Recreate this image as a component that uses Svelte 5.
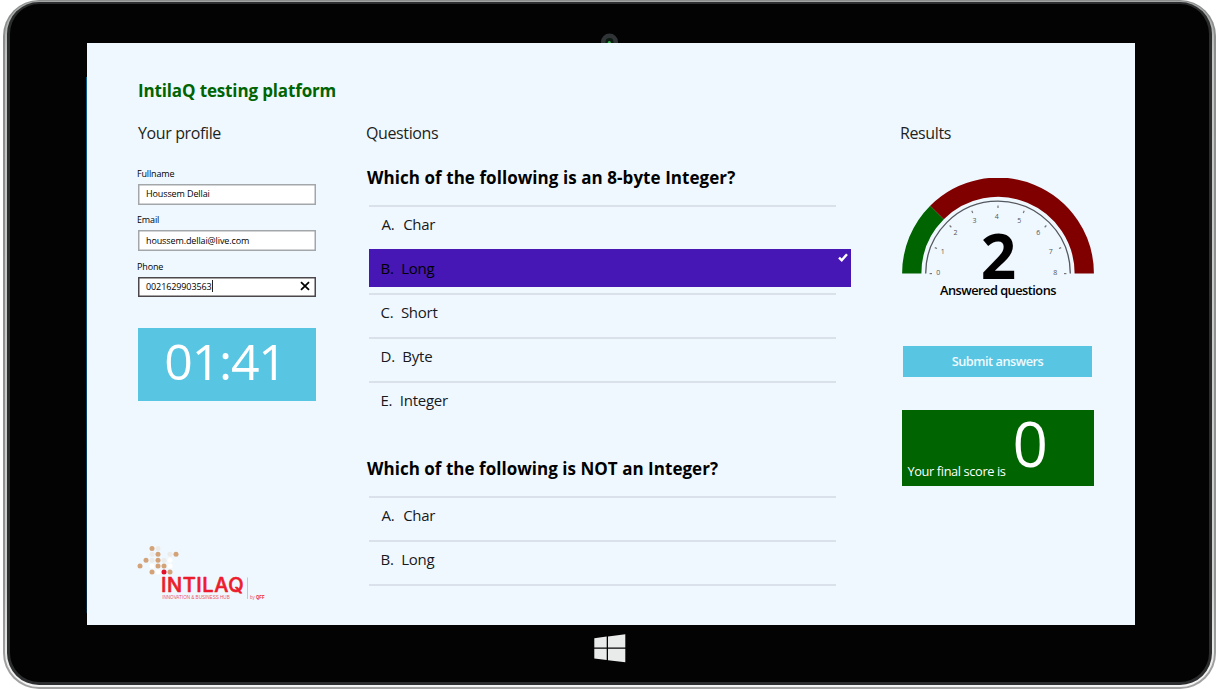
<script>
  const questions = [
    {
      title: 'Which of the following is an 8-byte Integer?',
      spacing: '0.06px',
      selected: 1,
      options: ['Char', 'Long', 'Short', 'Byte', 'Integer']
    },
    {
      title: 'Which of the following is NOT an Integer?',
      spacing: '0.03px',
      selected: -1,
      options: ['Char', 'Long']
    }
  ];
  const letters = ['A.', 'B.', 'C.', 'D.', 'E.'];

  const gauge = [0, 1, 2, 3, 4, 5, 6, 7, 8].map((n) => {
    const a = Math.PI * (1 - n / 8);
    return {
      n,
      x1: 96 + 66 * Math.cos(a),
      y1: 95.6 - 65.5 * Math.sin(a),
      x2: 96 + 68.4 * Math.cos(a),
      y2: 95.6 - 68 * Math.sin(a),
      tx: 94.8 + 58.5 * Math.cos(a),
      ty: 97 - 56 * Math.sin(a)
    };
  });

  const tan = '#d3a377';
  const pale = '#ebebea';
  const dots = [
    [27, 13.5, tan], [33, 13.5, pale],
    [27, 19.3, pale], [33, 19.3, tan], [45, 19.3, pale], [51, 19.3, tan],
    [21, 25.2, tan], [27, 25.2, pale], [33, 25.2, tan], [39, 25.2, pale], [45, 25.2, '#fff'],
    [15, 31, tan], [27, 31, '#fff'], [33, 31, tan], [39, 31, tan], [45, 31, '#fff'],
    [27, 37, tan], [33, 37, '#fff'], [39, 37, '#e4102a'], [45, 37, tan]
  ];
</script>

<div class="tablet">
  <div class="rim">
    <div class="bezel">
      <svg class="camera" width="20" height="10" viewBox="0 0 20 10">
        <circle cx="9.5" cy="9" r="8.5" fill="#303436" />
        <circle cx="9.5" cy="9" r="4" fill="#0b1a10" />
        <circle cx="9.3" cy="9.5" r="1.6" fill="#2fae4d" />
      </svg>

      <main class="screen">
        <h1>IntilaQ testing platform</h1>
        <div class="columns">
          <section class="profile">
            <h2>Your profile</h2>
            <div class="fields">
              <label>
                <span class="lab">Fullname</span>
                <span class="box">Houssem Dellai</span>
              </label>
              <label>
                <span class="lab">Email</span>
                <span class="box">houssem.dellai@live.com</span>
              </label>
              <label>
                <span class="lab">Phone</span>
                <span class="box active">
                  <span class="num">0021629903563</span><i class="caret"></i>
                  <svg width="10" height="10" viewBox="0 0 10 10">
                    <path d="M1 1.2 L9 8.8 M9 1.2 L1 8.8" stroke="#000" stroke-width="1.8" />
                  </svg>
                </span>
              </label>
            </div>
            <div class="timer">01:41</div>
            <svg class="logo" width="150" height="70" viewBox="0 0 150 70">
              {#each dots as [x, y, c]}
                <circle cx={x} cy={y} r="2.5" fill={c} />
              {/each}
              <text x="36" y="57" class="brand" textLength="82.5">INTILAQ</text>
              <text x="37.2" y="64.4" class="tag" textLength="67.5" lengthAdjust="spacingAndGlyphs">INNOVATION &amp; BUSINESS HUB</text>
              <path d="M122.5 42.5V64" stroke="#f3a3a8" stroke-width="0.8" />
              <text x="125" y="64.2" class="by">by</text>
              <text x="131" y="64.2" class="qff" textLength="8.5" lengthAdjust="spacingAndGlyphs">QFF</text>
            </svg>
          </section>

          <section class="questions">
            <h2>Questions</h2>
            {#each questions as q}
              <h3 style="letter-spacing:{q.spacing}">{q.title}</h3>
              <ul>
                {#each q.options as o, i}
                  <li class:selected={i === q.selected}>
                    <span class="opt o{i}"><span>{letters[i]}</span><span>{o}</span></span>
                    {#if i === q.selected}
                      <svg width="10" height="9" viewBox="0 0 10 9">
                        <path d="M1 4.6 L3.7 7.2 L9 1.2" fill="none" stroke="#fff" stroke-width="2.4" />
                      </svg>
                    {/if}
                  </li>
                {/each}
              </ul>
            {/each}
          </section>

          <section class="results">
            <h2>Results</h2>
            <svg class="gauge" width="194" height="122" viewBox="0 0 194 122">
              <path d="M9.75 95.5 A86.25 86.25 0 0 1 35.01 34.51" fill="none" stroke="#006400" stroke-width="19.3" />
              <path d="M35.01 34.51 A86.25 86.25 0 0 1 182.25 95.5" fill="none" stroke="#800000" stroke-width="19.3" />
              <path d="M23.7 95.5 A72.3 72.3 0 0 1 168.3 95.5" fill="none" stroke="#55585e" stroke-width="1.3" />
              {#each gauge as g}
                <line x1={g.x1} y1={g.y1} x2={g.x2} y2={g.y2} stroke="#777" stroke-width="1.2" />
                <text x={g.tx} y={g.ty} class="tick">{g.n}</text>
              {/each}
              <text x="96.5" y="101.4" class="count">2</text>
              <text x="38" y="116.8" class="caption" textLength="116.5">Answered questions</text>
            </svg>
            <div class="submit">Submit answers</div>
            <div class="score">
              <span class="text">Your final score is</span>
              <span class="value">0</span>
            </div>
          </section>
        </div>
      </main>

      <svg class="win" width="32" height="29" viewBox="0 0 32 29">
        <path d="M0.3 4.3 L12.7 2.6 V13.4 H0.3Z M14 2.4 L31.3 0.2 V13.4 H14Z M0.3 14.7 H12.7 V26 L0.3 24.4Z M14 14.7 H31.3 V28.2 L14 26.2Z" fill="#e9ebea" />
      </svg>
    </div>
  </div>
</div>

<style>
  :global(body) {
    background: #fff;
    overflow: hidden;
  }
  .tablet {
    box-sizing: border-box;
    width: 1213px;
    height: 689px;
    margin-left: 3px;
    padding: 1px 2px 2px;
    border-radius: 36px;
    background: linear-gradient(to bottom, #8c8e8e, #929494 85%, #a2a2a2);
    font-family: 'Open Sans', 'Noto Sans', sans-serif;
    color: #000;
  }
  .rim {
    box-sizing: border-box;
    height: 686px;
    padding: 1px 2px 2px;
    border-radius: 34px;
    background: linear-gradient(to bottom, #a4a6a6, #c4c4c4 8%, #d0d0d0 85%, #f4f4f4);
  }
  .bezel {
    box-sizing: border-box;
    height: 683px;
    border: solid #2c2d2e;
    border-width: 2px 3px 3px;
    border-radius: 32px;
    background: #030303;
    display: flex;
    flex-direction: column;
    align-items: center;
  }
  .camera {
    margin: 29px 0 0 0;
    flex: none;
  }
  .screen {
    box-sizing: border-box;
    width: 1048px;
    height: 582px;
    flex: none;
    margin-left: 3px;
    padding: 36px 0 0 51px;
    background: #f0f8ff;
    position: relative;
  }
  .screen::before {
    content: '';
    position: absolute;
    left: -1px;
    top: 34px;
    width: 1px;
    height: 536px;
    background: linear-gradient(to bottom, #0a5b90, #064a78 50%, #04233c);
  }
  .win {
    flex: none;
    margin: 9px 0 0 0;
  }
  h1, h2, h3 {
    margin: 0;
    white-space: nowrap;
  }
  h1 {
    font-size: 17px;
    line-height: 24px;
    font-weight: 700;
    letter-spacing: -0.14px;
    color: #006400;
  }
  .columns {
    display: grid;
    grid-template-columns: 229px 533px 194px;
    margin-top: 17px;
  }
  h2 {
    font-size: 16px;
    line-height: 26px;
    font-weight: 370;
    letter-spacing: -0.38px;
    color: #1c1f22;
  }
  .profile {
    width: 178px;
  }
  .questions h2 {
    margin-left: -1px;
  }
  .fields {
    display: flex;
    flex-direction: column;
    gap: 5px;
    margin: 21px 0 27px;
  }
  .fields label {
    display: block;
    height: 41.3px;
  }
  .lab {
    display: block;
    margin-left: -1px;
    font-size: 9px;
    line-height: 14px;
    height: 17px;
    letter-spacing: -0.15px;
  }
  .box {
    box-sizing: border-box;
    display: flex;
    align-items: center;
    height: 20.67px;
    padding: 0 6px 1px 8px;
    box-shadow: inset 0 0 0 1.5px #a3a7aa;
    background: #fff;
    font-size: 9px;
    letter-spacing: -0.11px;
  }
  .box.active {
    box-shadow: inset 0 0 0 1.5px #4c474a;
  }
  .num {
    letter-spacing: -0.1px;
  }
  .caret {
    width: 1px;
    height: 12px;
    background: #222;
  }
  .active svg {
    margin-left: auto;
  }
  .timer {
    height: 73.5px;
    line-height: 66px;
    background: #58c5e2;
    color: #fff;
    text-align: center;
    font-size: 50px;
    font-weight: 400;
    letter-spacing: -1.2px;
    text-indent: -4px;
  }
  .logo {
    display: block;
    margin: 133.5px 0 0 -13px;
    overflow: visible;
  }
  .brand {
    font: 500 20px 'Inter', sans-serif;
    fill: #ec1c2d;
    stroke: #ec1c2d;
    stroke-width: 0.6;
    stroke-linejoin: round;
  }
  .tag {
    font: 400 5px 'Liberation Sans', sans-serif;
    fill: #ee5560;
  }
  .by {
    font: 400 4.5px 'Liberation Sans', sans-serif;
    fill: #ee5560;
  }
  .qff {
    font: 700 4.8px 'Liberation Sans', sans-serif;
    fill: #ec1c2d;
  }
  h3 {
    font-size: 17px;
    line-height: 26px;
    font-weight: 700;
    margin-top: 19px;
  }
  ul + h3 {
    margin-top: 31px;
  }
  ul {
    list-style: none;
    margin: 14px 0 0 2px;
    padding: 0;
    width: 467px;
  }
  ul:last-child {
    border-bottom: 2px solid #dbe1ea;
  }
  li {
    box-sizing: border-box;
    height: 44px;
    border-top: 2px solid #dbe1ea;
    line-height: 35px;
    font-size: 15px;
    white-space: nowrap;
    color: #17191c;
  }
  li.selected {
    display: flex;
    justify-content: space-between;
    align-items: flex-start;
    width: 482px;
    height: 38px;
    margin-bottom: 6px;
    border-top: 0;
    background: #4617b4;
    color: #000;
    line-height: 39px;
  }
  li.selected svg {
    margin: 4px 3.5px 0 0;
  }
  .opt {
    display: inline-flex;
    gap: 7.5px;
    margin-left: 11.5px;
    letter-spacing: -0.25px;
  }
  .o0 {
    margin-left: 12.5px;
    gap: 9px;
    letter-spacing: -0.35px;
  }
  .gauge {
    display: block;
    margin: 32px 0 0 1.9px;
  }
  .tick {
    font-size: 7px;
    fill: #555;
    text-anchor: middle;
  }
  .count {
    font-size: 62px;
    font-weight: 700;
    text-anchor: middle;
  }
  .caption {
    font-size: 12.8px;
    font-weight: 600;
  }
  .submit {
    width: 189px;
    height: 30.5px;
    margin: 46px 0 0 3px;
    background: #58c5e2;
    color: #effaff;
    text-align: center;
    font-size: 12.8px;
    line-height: 30px;
    font-weight: 600;
    letter-spacing: -0.5px;
  }
  .score {
    display: flex;
    box-sizing: border-box;
    width: 192.5px;
    height: 76px;
    margin: 33px 0 0 1.5px;
    padding-left: 6px;
    background: #006400;
    color: #fff;
    white-space: nowrap;
  }
  .score .text {
    font-size: 12.8px;
    line-height: 20px;
    letter-spacing: -0.38px;
    margin-top: 51px;
  }
  .score .value {
    font-size: 62px;
    line-height: 67px;
    font-weight: 420;
    margin-left: 7px;
  }
</style>
